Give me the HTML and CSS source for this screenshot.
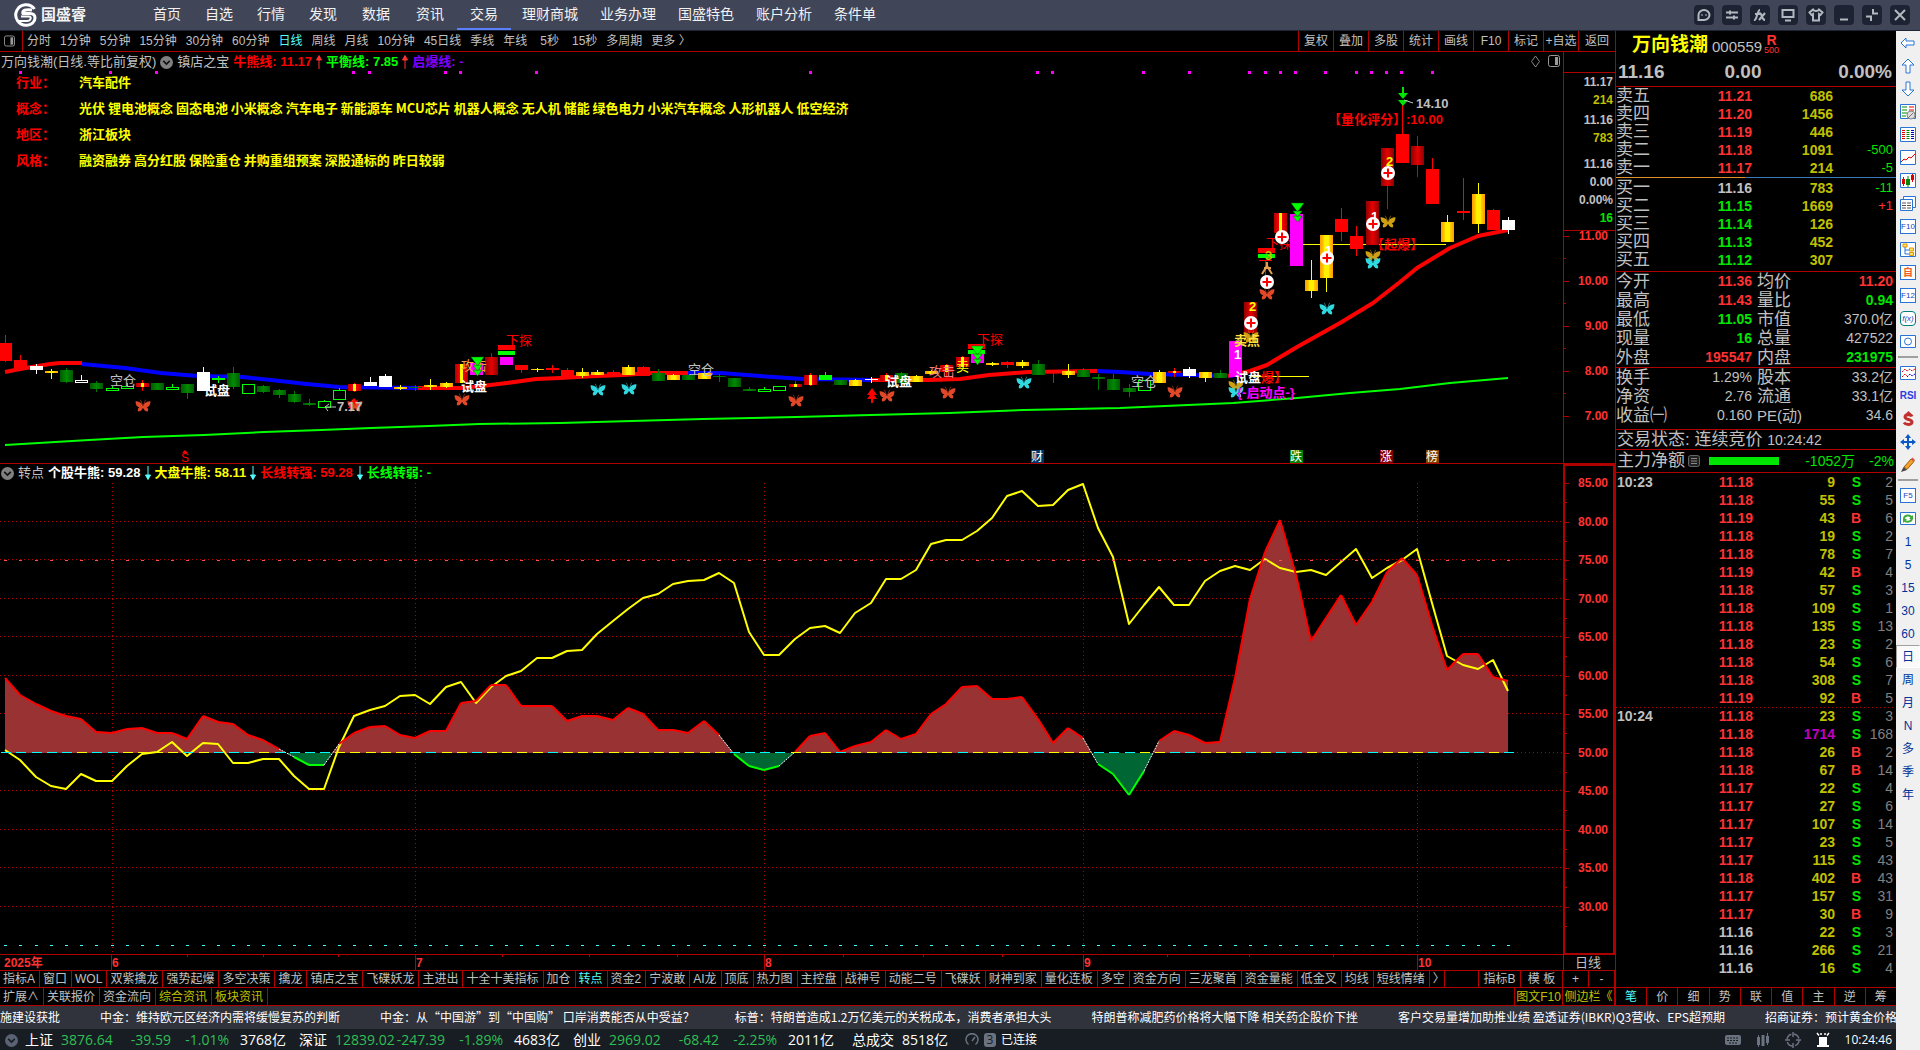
FILE: index.html
```html
<!DOCTYPE html>
<html lang="zh-CN">
<head>
<meta charset="utf-8">
<title>国盛睿 - 万向钱潮</title>
<link rel="stylesheet" href="styles.css">
</head>
<body>
<svg class="defs" width="0" height="0" aria-hidden="true">
  <defs>
    <linearGradient id="g-green"><stop offset="0" stop-color="#005a00"/><stop offset=".5" stop-color="#008a00"/><stop offset="1" stop-color="#005a00"/></linearGradient>
    <linearGradient id="g-yellow"><stop offset="0" stop-color="#ff9c00"/><stop offset=".25" stop-color="#ffc400"/><stop offset=".35" stop-color="#fff000"/><stop offset=".65" stop-color="#fff000"/><stop offset=".75" stop-color="#ffc400"/><stop offset="1" stop-color="#ff9c00"/></linearGradient>
    <linearGradient id="g-dark"><stop offset="0" stop-color="#900000"/><stop offset=".5" stop-color="#e60000"/><stop offset="1" stop-color="#900000"/></linearGradient>
    <linearGradient id="g-stripe"><stop offset="0" stop-color="#b00000"/><stop offset=".38" stop-color="#ff0000"/><stop offset=".38" stop-color="#ffff00"/><stop offset=".62" stop-color="#ffff00"/><stop offset=".62" stop-color="#ff0000"/><stop offset="1" stop-color="#b00000"/></linearGradient>
    <symbol id="butterfly" viewBox="0 0 16 14">
      <path fill="currentColor" d="M8 7C6 3 3 2 0 2c0 3 1 6 4 6.500C2 9.500 2 11.500 3 13c2.500 0 4-1.500 5-4 1 2.500 2.500 4 5 4 1-1.500 1-3.500-1-4.500 3-.5 4-3.500 4-6.500-3 0-6 1-8 5z"/>
      <path fill="none" stroke="currentColor" stroke-opacity=".6" d="M7.500 6L5 0M8.500 6L11 0"/>
    </symbol>
    <symbol id="plus" viewBox="0 0 14 14"><circle cx="7" cy="7" r="7" fill="#fff"/><path stroke="#f00" stroke-width="2" d="M7 2.500v9M2.500 7h9"/></symbol>
    <symbol id="up" viewBox="0 0 6 14"><path d="M3 14V1M0.500 5L3 0.500 5.500 5z" stroke="currentColor" fill="currentColor" stroke-width="1"/></symbol>
    <symbol id="down" viewBox="0 0 6 14"><path d="M3 0v13M0.500 9L3 13.500 5.500 9z" stroke="currentColor" fill="currentColor" stroke-width="1"/></symbol>
    <symbol id="chev" viewBox="0 0 12 12"><circle cx="6" cy="6" r="6" fill="#808080"/><path d="M3 4.500l3 3 3-3" stroke="#111" stroke-width="1.500" fill="none"/></symbol>
    <symbol id="pane" viewBox="0 0 12 12"><rect x=".5" y=".5" width="11" height="11" rx="2" fill="none" stroke="#999"/><path d="M7 2h3v8H7z" fill="#999"/></symbol>
  </defs>
</svg>
<div class="app">
  <header class="top">
    <a class="logo" href="#">
      <svg width="24" height="24" viewBox="0 0 24 24"><path fill="none" stroke="#fff" stroke-width="3" d="M20.500 6A10.300 10.300 0 1 0 13 22.200c4 0 8-3 8-7.200 0-3-2-4.500-5-4.500H9c-1-3 2-4.500 9-3.500"/><path fill="none" stroke="#fff" stroke-width="2" d="M7 13.500h8c3 0 2 4.500-2 4.500H5"/></svg>
      <span>国盛睿</span>
    </a>
    <nav class="menu">
      <div class="menu-group short"><a href="#">首页</a><a href="#">自选</a><a href="#">行情</a><a href="#">发现</a></div>
      <div class="menu-group"><a href="#">数据</a><a href="#">资讯</a><a href="#" class="on">交易</a></div>
      <div class="menu-group long"><a href="#">理财商城</a><a href="#">业务办理</a><a href="#">国盛特色</a><a href="#">账户分析</a><a href="#">条件单</a></div>
    </nav>
    <div class="win">
      <button aria-label="消息"><svg viewBox="0 0 20 20"><path d="M4.500 15V10a5.500 5 0 1 1 5.500 5z"/><path d="M8 9.500v1M12 9.500v1"/></svg></button>
      <button aria-label="设置"><svg viewBox="0 0 20 20"><path d="M4 7.500h12M4 12.500h12M8 5.500v4M12 10.500v4"/></svg></button>
      <button aria-label="公式"><svg viewBox="0 0 20 20"><path d="M4 15c3 1 3-10 6-10M5 9h5M9 8c4 0 2 7 6 7M15 8l-6 7"/></svg></button>
      <button aria-label="屏幕"><svg viewBox="0 0 20 20"><path d="M4.500 5h11v7h-11zM7 15.500h6"/></svg></button>
      <button aria-label="皮肤"><svg viewBox="0 0 20 20"><path d="M7 4.500L3.500 7.500 5.500 10 7 9v6.500h6V9l1.500 1 2-2.500L13 4.500c-1 2-5 2-6 0z"/></svg></button>
      <button aria-label="最小化"><svg viewBox="0 0 20 20"><path d="M6 14.500h8"/></svg></button>
      <button aria-label="还原"><svg viewBox="0 0 20 20"><path d="M4 11.500h5V16M16 8.500h-5V4"/></svg></button>
      <button aria-label="关闭"><svg viewBox="0 0 20 20"><path d="M5 5l10 10M15 5L5 15"/></svg></button>
    </div>
  </header>

  <div class="body">
    <main class="work">
      <div class="panels">
        <section class="charts">
          <div class="periods">
            <button class="pane-btn" aria-label="切换窗格"><svg width="11" height="12"><use href="#pane"/></svg></button>
            <div class="period-list">
              <button>分时</button><button>1分钟</button><button>5分钟</button><button>15分钟</button><button>30分钟</button><button>60分钟</button><button class="on">日线</button><button>周线</button><button>月线</button><button>10分钟</button><button>45日线</button><button>季线</button><button>年线</button><button class="wide">5秒</button><button>15秒</button><button>多周期</button><button>更多 〉</button>
            </div>
            <div class="tools"><button>复权</button><button>叠加</button><button>多股</button><button>统计</button><button>画线</button><button>F10</button><button>标记</button><button>+自选</button><button>返回</button></div>
          </div>

          <div class="pane price">
            <svg class="plot" id="price-plot" viewBox="0 52 1615 412"></svg>
            <div class="overlay">
              <div class="legend">
                <span class="gray">万向钱潮(日线.等比前复权)</span><svg width="13" height="13"><use href="#chev"/></svg><span class="gray">镇店之宝</span>
                <b class="red">牛熊线: 11.17</b><svg class="red2" width="6" height="14"><use href="#up"/></svg>
                <b class="lime">平衡线: 7.85</b><svg class="red2" width="6" height="14"><use href="#up"/></svg>
                <b class="purple">启爆线: -</b>
              </div>
              <dl class="facts">
                <dt>行业：</dt><dd>汽车配件</dd>
                <dt>概念：</dt><dd>光伏 锂电池概念 固态电池 小米概念 汽车电子 新能源车 MCU芯片 机器人概念 无人机 储能 绿色电力 小米汽车概念 人形机器人 低空经济</dd>
                <dt>地区：</dt><dd>浙江板块</dd>
                <dt>风格：</dt><dd>融资融券 高分红股 保险重仓 并购重组预案 深股通标的 昨日较弱</dd>
              </dl>
            </div>
          </div>

          <div class="pane turn">
            <svg class="plot" id="turn-plot" viewBox="0 464 1615 506"></svg>
            <div class="overlay">
              <div class="legend second">
                <svg width="13" height="13"><use href="#chev"/></svg><span class="gray">转点</span>
                <b class="white">个股牛熊: 59.28</b><svg class="cyan" width="6" height="14"><use href="#down"/></svg>
                <b class="yellow">大盘牛熊: 58.11</b><svg class="cyan" width="6" height="14"><use href="#down"/></svg>
                <b class="red">长线转强: 59.28</b><svg class="cyan" width="6" height="14"><use href="#down"/></svg>
                <b class="lime">长线转弱: -</b>
              </div>
            </div>
          </div>

          <div class="tabs">
            <button>指标A</button><button>窗口</button><button>WOL</button><button>双紫擒龙</button><button>强势起爆</button><button>多空决策</button><button>擒龙</button><button>镇店之宝</button><button>飞碟妖龙</button><button>主进出</button><button>十全十美指标</button><button>加仓</button><button class="on">转点</button><button>资金2</button><button>宁波敢</button><button>AI龙</button><button>顶底</button><button>热力图</button><button>主控盘</button><button>战神号</button><button>动能二号</button><button>飞碟妖</button><button>财神到家</button><button>量化连板</button><button>多空</button><button>资金方向</button><button>三龙聚首</button><button>资金量能</button><button>低金叉</button><button>均线</button><button>短线情绪</button><button class="more">〉</button>
            <div class="tabs-end"><button class="w42">指标B</button><button class="w42">模 板</button><button class="w26">+</button><button class="w26">-</button></div>
          </div>
          <div class="tabs links">
            <button>扩展∧</button><button>关联报价</button><button>资金流向</button><button class="gold">综合资讯</button><button class="gold">板块资讯</button>
            <div class="tabs-end"><button class="gold w48">图文F10</button><button class="gold w52">侧边栏《</button></div>
          </div>
        </section>

        <aside class="quote">
          <div class="title">
            <h1>万向钱潮</h1><span class="code">000559</span><span class="mark"><b>R</b><small>500</small></span>
          </div>
          <div class="last"><span>11.16</span><span>0.00</span><span>0.00%</span></div>
          <table class="book asks">
            <tr><th>卖五</th><td class="r">11.21</td><td class="y">686</td><td></td></tr>
            <tr><th>卖四</th><td class="r">11.20</td><td class="y">1456</td><td></td></tr>
            <tr><th>卖三</th><td class="r">11.19</td><td class="y">446</td><td></td></tr>
            <tr><th>卖二</th><td class="r">11.18</td><td class="y">1091</td><td class="g">-500</td></tr>
            <tr><th>卖一</th><td class="r">11.17</td><td class="y">214</td><td class="g">-5</td></tr>
          </table>
          <div class="split"></div>
          <table class="book bids">
            <tr><th>买一</th><td>11.16</td><td class="y">783</td><td class="g">-11</td></tr>
            <tr><th>买二</th><td class="g">11.15</td><td class="y">1669</td><td class="r">+1</td></tr>
            <tr><th>买三</th><td class="g">11.14</td><td class="y">126</td><td></td></tr>
            <tr><th>买四</th><td class="g">11.13</td><td class="y">452</td><td></td></tr>
            <tr><th>买五</th><td class="g">11.12</td><td class="y">307</td><td></td></tr>
          </table>
          <table class="stats">
            <tr><th>今开</th><td class="r">11.36</td><th>均价</th><td class="r">11.20</td></tr>
            <tr><th>最高</th><td class="r">11.43</td><th>量比</th><td class="g">0.94</td></tr>
            <tr><th>最低</th><td class="g">11.05</td><th>市值</th><td class="thin">370.0亿</td></tr>
            <tr><th>现量</th><td class="g">16</td><th>总量</th><td class="thin">427522</td></tr>
            <tr><th>外盘</th><td class="r">195547</td><th>内盘</th><td class="g">231975</td></tr>
          </table>
          <table class="stats tall">
            <tr><th>换手</th><td>1.29%</td><th>股本</th><td>33.2亿</td></tr>
            <tr><th>净资</th><td>2.76</td><th>流通</th><td>33.1亿</td></tr>
            <tr><th>收益㈠</th><td>0.160</td><th class="pe">PE(动)</th><td>34.6</td></tr>
          </table>
          <div class="state">交易状态: 连续竞价 <span>10:24:42</span></div>
          <div class="flow"><span class="lbl">主力净额</span><svg width="12" height="12" viewBox="0 0 12 12"><rect x=".5" y=".5" width="11" height="11" rx="2" fill="#222" stroke="#666"/><path stroke="#888" d="M3 3.500h6M3 6h6M3 8.500h6"/></svg><i></i><b>-1052万</b><b>-2%</b></div>
          <table class="ticks">
            <tr><th>10:23</th><td class="r">11.18</td><td>9</td><td class="g">S</td><td>2</td></tr>
            <tr><th></th><td class="r">11.18</td><td>55</td><td class="g">S</td><td>5</td></tr>
            <tr><th></th><td class="r">11.19</td><td>43</td><td class="r">B</td><td>6</td></tr>
            <tr><th></th><td class="r">11.18</td><td>19</td><td class="g">S</td><td>2</td></tr>
            <tr><th></th><td class="r">11.18</td><td>78</td><td class="g">S</td><td>7</td></tr>
            <tr><th></th><td class="r">11.19</td><td>42</td><td class="r">B</td><td>4</td></tr>
            <tr><th></th><td class="r">11.18</td><td>57</td><td class="g">S</td><td>3</td></tr>
            <tr><th></th><td class="r">11.18</td><td>109</td><td class="g">S</td><td>1</td></tr>
            <tr><th></th><td class="r">11.18</td><td>135</td><td class="g">S</td><td>13</td></tr>
            <tr><th></th><td class="r">11.18</td><td>23</td><td class="g">S</td><td>2</td></tr>
            <tr><th></th><td class="r">11.18</td><td>54</td><td class="g">S</td><td>6</td></tr>
            <tr><th></th><td class="r">11.18</td><td>308</td><td class="g">S</td><td>7</td></tr>
            <tr><th></th><td class="r">11.19</td><td>92</td><td class="r">B</td><td>5</td></tr>
            <tr class="minute"><th>10:24</th><td class="r">11.18</td><td>23</td><td class="g">S</td><td>3</td></tr>
            <tr><th></th><td class="r">11.18</td><td class="big">1714</td><td class="g">S</td><td>168</td></tr>
            <tr><th></th><td class="r">11.18</td><td>26</td><td class="r">B</td><td>2</td></tr>
            <tr><th></th><td class="r">11.18</td><td>67</td><td class="r">B</td><td>14</td></tr>
            <tr><th></th><td class="r">11.17</td><td>22</td><td class="g">S</td><td>4</td></tr>
            <tr><th></th><td class="r">11.17</td><td>27</td><td class="g">S</td><td>6</td></tr>
            <tr><th></th><td class="r">11.17</td><td>107</td><td class="g">S</td><td>14</td></tr>
            <tr><th></th><td class="r">11.17</td><td>23</td><td class="g">S</td><td>5</td></tr>
            <tr><th></th><td class="r">11.17</td><td>115</td><td class="g">S</td><td>43</td></tr>
            <tr><th></th><td class="r">11.18</td><td>402</td><td class="r">B</td><td>43</td></tr>
            <tr><th></th><td class="r">11.17</td><td>157</td><td class="g">S</td><td>31</td></tr>
            <tr><th></th><td class="r">11.17</td><td>30</td><td class="r">B</td><td>9</td></tr>
            <tr><th></th><td>11.16</td><td>22</td><td class="g">S</td><td>3</td></tr>
            <tr><th></th><td>11.16</td><td>266</td><td class="g">S</td><td>21</td></tr>
            <tr><th></th><td>11.16</td><td>16</td><td class="g">S</td><td>4</td></tr>
          </table>
          <div class="quote-tabs"><button class="on">笔</button><button>价</button><button>细</button><button>势</button><button>联</button><button>值</button><button>主</button><button>逆</button><button>筹</button></div>
        </aside>
      </div>

      <div class="news">
        <a href="#">施建设获批</a><a href="#">中金：维持欧元区经济内需将缓慢复苏的判断</a><a href="#">中金：从“中国游”到“中国购” 口岸消费能否从中受益？</a><a href="#">标普：特朗普造成1.2万亿美元的关税成本，消费者承担大头</a><a href="#">特朗普称减肥药价格将大幅下降 相关药企股价下挫</a><a href="#">客户交易量增加助推业绩 盈透证券(IBKR)Q3营收、EPS超预期</a><a href="#">招商证券：预计黄金价格</a>
      </div>

      <footer class="status">
        <svg width="13" height="13" viewBox="0 0 12 12"><circle cx="6" cy="6" r="6" fill="#5b6273"/><path d="M3 4.500l3 3 3-3" stroke="#171d22" stroke-width="1.500" fill="none"/></svg>
        <div class="index"><span>上证</span><em>3876.64</em><em>-39.59</em><em>-1.01%</em><span>3768亿</span></div>
        <div class="index"><span>深证</span><em>12839.02</em><em>-247.39</em><em>-1.89%</em><span>4683亿</span></div>
        <div class="index"><span>创业</span><em>2969.02</em><em>-68.42</em><em>-2.25%</em><span>2011亿</span></div>
        <div class="total"><span>总成交</span><span>8518亿</span></div>
        <div class="link"><svg width="14" height="14" viewBox="0 0 14 14"><path d="M3.500 11.500a6 6 0 1 1 7 0M7 8l3-4" fill="none" stroke="#6b7280" stroke-width="1.500"/></svg><span class="badge">3</span><span>已连接</span></div>
        <div class="tray">
          <svg width="16" height="16" viewBox="0 0 16 16"><rect y="3" width="16" height="10" rx="2" fill="#6b7280"/><path stroke="#171d22" stroke-dasharray="2 1" d="M2 6h12M2 8.500h12M4 11h8"/></svg>
          <svg width="14" height="16" viewBox="0 0 14 16"><path fill="#6b7280" d="M1 5h3v8H1zM5.500 3h3v11h-3zM10 4h3v7h-3zM2 3h1v12H2zM11 1h1v12h-1z"/></svg>
          <svg width="16" height="16" viewBox="0 0 16 16"><circle cx="8" cy="8" r="6" fill="none" stroke="#6b7280" stroke-width="1.500" stroke-dasharray="7 2.400"/><path stroke="#6b7280" stroke-width="1.500" d="M8 0v5M8 11v5M0 8h5M11 8h5"/></svg>
          <svg width="14" height="16" viewBox="0 0 14 16"><path fill="#fff" d="M3 5h8v8h2v2H1v-2h2z"/><path stroke="#fff" stroke-width="1.500" d="M1 1l2 2.500M13 1l-2 2.500M5 1v2M9 1v2"/></svg>
          <time>10:24:46</time>
        </div>
      </footer>
    </main>

    <div class="rail" role="toolbar" aria-label="工具栏">
      <button aria-label="后退"><svg viewBox="0 0 16 16"><path fill="#fff" stroke="#2a74d8" d="M1 8l5-5v3h8v4H6v3z"/></svg></button>
      <button aria-label="上移"><svg viewBox="0 0 16 16"><path fill="#fff" stroke="#2a74d8" d="M8 1l6 6h-4v8H6V7H2z"/></svg></button>
      <button aria-label="下移"><svg viewBox="0 0 16 16"><path fill="#fff" stroke="#2a74d8" d="M8 15l6-6h-4V1H6v8H2z"/></svg></button>
      <button aria-label="报表"><svg viewBox="0 0 16 16"><path class="box" d="M.5.5h15v14H.5z"/><path stroke="#080" d="M2 3h5M2 6h5M2 9h5M2 12h4"/><path stroke="#d00" d="M9 3h5M9 6h5"/><circle cx="11" cy="11" r="4" fill="#ddd" stroke="#888"/><path stroke="#777" d="M8 14l5-5"/></svg></button>
      <button aria-label="行情列表"><svg viewBox="0 0 16 16"><path class="box" d="M.5.5h15v14H.5z"/><path stroke="#d00" d="M2 3.500h3M2 5.500h3M2 7.500h3M2 9.500h3M2 11.500h3"/><path stroke="#080" d="M6.500 3.500h3M6.500 5.500h3M6.500 7.500h3M6.500 9.500h3M6.500 11.500h3"/><path stroke="#00c" d="M11 3.500h3M11 5.500h3M11 7.500h3M11 9.500h3M11 11.500h3"/></svg></button>
      <button aria-label="分时图"><svg viewBox="0 0 16 16"><path class="box" d="M.5.5h15v14H.5z"/><path stroke="#d00" fill="none" d="M1 12l3-3 2 1 3-3 2 1 4-4"/></svg></button>
      <button aria-label="K线图"><svg viewBox="0 0 16 16"><path class="box" d="M.5.5h15v14H.5z"/><path fill="#d00" d="M2 6h3v5H2zM11 2h3v5h-3zM3 4h1v9H3zM12 1h1v8h-1z"/><path fill="#080" d="M6 6h4v6H6zM7.500 3h1v11h-1z"/></svg></button>
      <button aria-label="多窗口"><svg viewBox="0 0 16 16"><path class="box" d="M3.500.5h12v11h-12z"/><path class="box" d="M.5 3.500h12v11H.5z"/><path stroke="#555" d="M2 7h4M7 7h4M2 9.500h4M7 9.500h4M2 12h4M7 12h4"/></svg></button>
      <button class="tag">F10</button>
      <button aria-label="板块树"><svg viewBox="0 0 16 16"><path class="box" d="M.5.5h15v14H.5z"/><path fill="#ffe066" stroke="#e69500" d="M3 2h4v3H3zM9.500 6h4v3h-4zM9.500 10.500h4v3h-4z"/><path stroke="#2a74d8" fill="none" d="M5 5v7h4M5 8h4"/></svg></button>
      <button class="tag self">自</button>
      <button class="tag">F12</button>
      <button class="tag fx">f(x)</button>
      <button aria-label="圈选"><svg viewBox="0 0 16 16"><path class="box" d="M.5 1.500h15v12H.5z"/><circle cx="8" cy="7.500" r="3.500" fill="none" stroke="#2a74d8"/></svg></button>
      <hr>
      <button aria-label="叠加曲线"><svg viewBox="0 0 16 16"><path class="box" d="M.5 1.500h15v13H.5z"/><path stroke="#d00" fill="none" stroke-dasharray="2 1" d="M2 7l3-3 2 2 3-2 2 2 3-2M2 12l3-3 2 2"/><path stroke="#00c" fill="none" stroke-dasharray="2 1" d="M7 12l3-3 2 2 3-2"/></svg></button>
      <button class="rsi">RSI</button>
      <button class="dollar" aria-label="标价"><svg viewBox="0 0 16 16"><path fill="none" stroke="#c03030" stroke-width="3" d="M12 5.500C11 3 5 3 5 6s7 2 7 5-6 3.500-8 .5"/><path fill="#c03030" d="M8.500 0l3.500 3.500H5z"/></svg></button>
      <button aria-label="移动"><svg viewBox="0 0 16 16"><path fill="#0a58c8" d="M8 0l3 4H5zM8 16l-3-4h6zM0 8l4-3v6zM16 8l-4 3V5zM7 4h2v3h3v2H9v3H7V9H4V7h3z"/></svg></button>
      <button aria-label="画笔"><svg viewBox="0 0 16 16"><path fill="#f0a030" stroke="#a06010" d="M4 10l7-8 3 2.500-7 8z"/><path fill="#444" d="M1 15l2.500-5L7 13z"/><path fill="#e05050" d="M11 2l1.500-1.500L15 3l-1 1.500z"/></svg></button>
      <hr>
      <button class="tag">F5</button>
      <button aria-label="刷新"><svg viewBox="0 0 16 16"><path class="box" d="M.5 1.500h15v12H.5z"/><path fill="none" stroke="#3cab3c" stroke-width="2" d="M4 8c0-4 6-5 8-1M12 7c0 4-6 5-8 2"/><path fill="#3cab3c" d="M13 4v4H9zM3 12V8h4z"/></svg></button>
      <button>1</button><button>5</button><button>15</button><button>30</button><button>60</button><button class="on">日</button><button>周</button><button>月</button><button>N</button><button>多</button><button>季</button><button>年</button>
    </div>
  </div>
</div>
<script src="charts.js"></script>
</body>
</html>
```
FILE: styles.css
```css
:root {
  --line: #b00000;
  --gray: #c0c0c0;
  --ui: "Liberation Sans", "Noto Sans CJK SC", sans-serif;
}
* { box-sizing: border-box; }
body { margin: 0; background: #000; color: var(--gray); font: 12px/16px var(--ui); }
button { margin: 0; padding: 0; border: 0; background: none; color: inherit; font: inherit; white-space: nowrap; }
a { color: inherit; text-decoration: none; }
svg { display: block; flex: none; }
.defs { position: absolute; }
.app { display: flex; flex-direction: column; min-height: 100vh; overflow: hidden; }

/* top bar */
.top { display: flex; align-items: center; height: 31px; background: #404558; border-bottom: 1px solid #1d2638; color: #f2f2f2; }
.logo { display: flex; align-items: center; gap: 3px; width: 141px; padding-left: 14px; font-size: 15px; font-weight: 700; }
.menu { display: flex; height: 100%; font-size: 14px; }
.menu-group { display: flex; }
.menu a { display: flex; align-items: center; padding: 0 13px; border-bottom: 2px solid transparent; }
.menu .short a { padding: 0 12px; }
.menu .long a { padding: 0 11px; }
.menu a.on { border-color: #5b7fff; }
.win { display: flex; gap: 8px; margin-left: auto; padding-right: 10px; }
.win button { width: 20px; height: 20px; border-radius: 4px; background: #1e2333; }
.win svg { width: 20px; height: 20px; fill: none; stroke: #b4b8c0; stroke-width: 2; }

.body { display: flex; flex: 1; }
.work { display: flex; flex: 1; flex-direction: column; min-width: 0; }
.panels { display: flex; flex: 1; }
.charts { flex: 1; min-width: 0; }

/* period toolbar */
.periods { display: flex; height: 21px; border-bottom: 1px solid var(--line); }
.pane-btn { width: 23px; padding-left: 4px; border-right: 1px solid var(--line); }
.period-list { display: flex; gap: 9px; padding-left: 4px; }
.period-list .on, .tabs .on, .quote-tabs .on { color: #54fcfc; }
.period-list .wide { padding: 0 4px; }
.tools { display: flex; margin-left: auto; }
.tools button { width: 35px; border-left: 1px solid var(--line); }
.tools button:last-child { width: 37px; }

/* chart panes: drawing and legend share one cell */
.pane { display: grid; }
.pane > * { grid-area: 1 / 1; }
.plot { width: 100%; height: auto; }
.plot text { font: 12px var(--ui); }
.plot .bold { font-weight: 700; }
.plot .axis { font-weight: 700; fill: #ff3232; text-anchor: end; }
.plot .lab { font-size: 13px; }
.overlay { font-size: 13px; }
.legend { display: flex; align-items: center; gap: 4px; height: 20px; padding-left: 1px; }
.second { height: 18px; }
.facts { display: grid; grid-template-columns: 63px 1fr; grid-auto-rows: 26px; margin: -3px 0 0 16px; font-family: "Noto Sans CJK SC", sans-serif; font-weight: 700; line-height: 26px; }
.facts dt { color: #f00; }
.facts dd { margin: 0; color: #ff0; }
.gray { color: var(--gray); }
.white { color: #fff; }
.yellow { color: #ff0; }
.red { color: #f00; }
.red2 { color: #ff3232; }
.lime { color: #0f0; }
.purple { color: #8000ff; }
.cyan { color: #54fcfc; }

/* indicator tabs */
.tabs { display: flex; height: 17px; border-top: 1px solid var(--line); }
.tabs.links { height: 19px; border-bottom: 1px solid var(--line); }
.tabs button { padding: 0 4px 0 3px; border-right: 1px solid var(--line); }
.tabs .more { width: 15px; overflow: hidden; }
.tabs .gold { color: #c0c000; }
.tabs-end { display: flex; margin-left: auto; border-left: 1px solid var(--line); }
.tabs-end button { padding: 0; }
.w26 { width: 26px; }
.w42 { width: 42px; }
.w48 { width: 48px; }
.w52 { width: 52px; }

/* quote panel */
.quote { display: flex; flex-direction: column; width: 281px; border-left: 1px solid var(--line); font-size: 14px; font-weight: 700; }
.title { display: flex; align-items: center; height: 27px; padding-left: 16px; }
.title h1 { margin: 0; color: #ff0; font-size: 19px; font-weight: 700; line-height: 26px; }
.code { padding: 4px 2px 0 4px; font-size: 15px; font-weight: 400; }
.mark { display: grid; color: #ff3232; text-align: center; line-height: 10px; }
.mark small { font-size: 9px; font-weight: 400; }
.last { display: grid; grid-template-columns: 92px 1fr 92px; height: 29px; padding: 0 4px 0 2px; border-bottom: 1px solid var(--line); font-size: 19px; line-height: 28px; }
.last :nth-child(2) { text-align: center; padding-right: 24px; }
.last :nth-child(3) { text-align: right; }
.quote table { width: 100%; border-collapse: collapse; table-layout: fixed; }
.quote td { padding: 0; text-align: right; }
.quote th { padding: 0; text-align: left; font-weight: 400; font-size: 17px; white-space: nowrap; }
.r { color: #ff3232; }
.g { color: #00e600; }
.y { color: #c0c000; }
.book tr { height: 18px; line-height: 18px; }
.book th { width: 66px; }
.book td:nth-child(2) { width: 70px; }
.book td:nth-child(3) { width: 81px; }
.book td:nth-child(4) { padding-right: 3px; font-size: 13px; font-weight: 400; }
.split { height: 1px; background: linear-gradient(90deg, #e0902c 46%, #3a7ab8 46%); }
.bids { margin: 1px 0 2px; }
.stats { border-top: 1px solid var(--line); }
.stats tr { height: 19px; line-height: 19px; }
.stats th { width: 66px; }
.stats td { width: 70px; }
.stats th:nth-child(3) { padding-left: 5px; }
.stats td:nth-child(4) { width: auto; padding-right: 3px; }
.stats .pe { font-size: 15px; }
.tall td, .stats .thin { font-weight: 400; }
.tall { margin-bottom: 4px; }
.state { height: 20px; padding-left: 1px; border-top: 1px solid var(--line); font-size: 17px; font-weight: 400; line-height: 19px; }
.state span { font-size: 14px; }
.flow { display: flex; align-items: center; height: 24px; padding: 0 2px 0 1px; border-top: 1px solid var(--line); border-bottom: 1px solid var(--line); color: #00e600; font-weight: 400; }
.flow .lbl { margin-right: 3px; color: var(--gray); font-size: 17px; }
.flow i { width: 70px; height: 8px; margin: 0 0 0 9px; background: #00e600; }
.flow b { flex: 1; text-align: right; font-weight: 400; }
.flow b:last-child { flex: 0 0 39px; }
.ticks tr { height: 18px; line-height: 18px; }
.quote .ticks th { width: 66px; padding-left: 1px; font-size: 14px; font-weight: 700; }
.ticks td:nth-child(2) { width: 71px; }
.ticks td:nth-child(3) { width: 82px; color: #c0c000; }
.ticks td:nth-child(4) { width: 26px; }
.ticks td:nth-child(5) { padding-right: 3px; color: #808080; font-weight: 400; }
.ticks td.big { color: #c000c0; }
.ticks .minute { background: repeating-linear-gradient(90deg, #b00000 0 1px, transparent 1px 4px) top / 100% 1px no-repeat; }
.quote-tabs { display: flex; height: 19px; margin-top: auto; border-top: 1px solid var(--line); border-bottom: 1px solid var(--line); font-size: 12px; font-weight: 400; }
.quote-tabs button { flex: 1; border-right: 1px solid var(--line); }
.quote-tabs button:last-child { border: 0; }

/* news ticker and status bar */
.news { display: flex; gap: 40px; height: 23px; overflow: hidden; background: #30323c; color: #fff; font: 12px/22px "Noto Sans CJK SC", sans-serif; white-space: nowrap; }
.news a { flex: none; }
.status { display: flex; align-items: center; height: 22px; padding: 0 4px 0 5px; background: #171d22; color: #fff; font: 14px/22px "Open Sans", "Noto Sans CJK SC", sans-serif; white-space: nowrap; }
.index { display: grid; grid-template-columns: 36px 57px 53px 58px 70px; }
.index:nth-child(2) { margin-left: 7px; }
.index em { color: #2fbf55; font-style: normal; }
.index em:nth-child(3), .index em:nth-child(4) { text-align: right; }
.index span:last-child { padding-left: 11px; }
.total { display: flex; gap: 8px; padding-left: 5px; }
.link { display: flex; align-items: center; gap: 5px; padding-left: 17px; font-size: 12px; }
.badge { width: 12px; height: 14px; border-radius: 3px; background: #6b7280; color: #171d22; line-height: 14px; text-align: center; }
.tray { display: flex; align-items: center; gap: 15px; margin-left: auto; }
.tray time { font-size: 12px; }

/* right rail */
.rail { display: flex; flex-direction: column; align-items: center; width: 24px; background: #f0f0f0; color: #003399; font-size: 12px; }
.rail button { display: flex; align-items: center; justify-content: center; width: 24px; height: 23px; }
.rail svg { width: 16px; height: 16px; }
.rail .box { fill: #fff; stroke: #2a74d8; }
.rail hr { width: 20px; height: 2px; margin: 3px 0; border: 0; background: #a0a0a0; }
.rail .tag { width: 16px; height: 15px; margin: 4px 0; border: 1px solid #2a74d8; background: #fff; color: #1a3fc0; font-size: 8px; }
.rail .self { color: #f06020; font-size: 10px; font-weight: 700; }
.rail .fx { border-radius: 4px; border-color: #00807a; font-style: italic; }
.rail .rsi { color: #2a3fe0; font-size: 10px; font-weight: 700; }
.rail .on { border: 1px solid; border-color: #a0a0a0 #fff #fff #a0a0a0; background: #fafafa; }
```
FILE: charts.js
```js
const STEP = 15.18;
const barX = i => Math.round(5.3 + STEP * i);
const out = { price: [], turn: [] };

const line = (x1, y1, x2, y2, stroke, extra = '') =>
  `<path d="M${x1} ${y1}L${x2} ${y2}" stroke="${stroke}" fill="none" ${extra}/>`;
const crisp = 'shape-rendering="crispEdges"';
const box = (x, y, w, h, fill) => `<rect x="${x}" y="${y}" width="${w}" height="${h}" fill="${fill}" ${crisp}/>`;
const label = (x, y, fill, str, cls = 'lab') => `<text x="${x}" y="${y}" fill="${fill}" class="${cls}">${str}</text>`;
const poly = (pts, stroke, w) =>
  `<polyline points="${pts}" fill="none" stroke="${stroke}" stroke-width="${w}" stroke-linejoin="round"/>`;

/* candles: high, body top, body bottom, low, kind */
const candles = [
  [335,343,361,362,'R'],[355,360,368,370,'R'],[364,366,370,374,'W'],[369,371,373,379,'Y'],[368,370,382,383,'G'],
  [375,380,383,383,'w'],[381,383,389,392,'G'],[386,388,391,391,'g'],[383,386,389,389,'g'],[380,383,387,391,'S'],
  [383,383,390,390,'G'],[384,387,390,390,'g'],[384,384,393,399,'G'],[367,372,391,391,'W'],[376,378,380,383,'L'],
  [367,373,387,389,'G'],[384,384,394,394,'g'],[385,386,392,393,'G'],[389,390,395,398,'G'],[391,394,402,403,'G'],
  [399,403,405,406,'G'],[400,401,408,408,'g'],[388,390,400,400,'g'],[383,384,391,392,'S'],[377,382,386,386,'W'],
  [374,376,387,387,'W'],[385,387,389,390,'Y'],[385,387,388,391,'G'],[379,385,387,390,'Y'],[382,383,387,388,'Y'],
  [364,364,383,383,'S'],[362,363,375,375,'M'],[353,357,375,375,'D'],[357,357,365,365,'M'],[365,365,370,373,'R'],
  [368,369,370,372,'Y'],[365,368,370,373,'R'],[368,370,376,376,'R'],[368,372,376,378,'Y'],[370,372,375,375,'Y'],
  [370,372,375,375,'R'],[365,367,375,375,'Y'],[366,367,376,376,'R'],[369,373,381,381,'G'],[374,375,380,380,'Y'],
  [375,375,380,380,'G'],[373,373,379,379,'Y'],[374,376,377,382,'G'],[378,378,387,387,'G'],[387,389,391,391,'G'],
  [387,389,392,392,'g'],[386,386,391,391,'g'],[381,384,387,387,'S'],[373,375,385,386,'S'],[372,375,380,380,'L'],
  [380,380,385,385,'G'],[379,380,386,386,'Y'],[377,379,380,383,'W'],[373,375,381,381,'S'],[372,373,383,383,'G'],
  [375,376,382,382,'Y'],[370,371,374,374,'Y'],[364,365,372,378,'S'],[356,357,367,367,'S'],[347,350,363,363,'M'],
  [362,363,365,366,'Y'],[361,362,365,368,'R'],[360,362,366,368,'Y'],[360,364,375,375,'G'],[370,370,371,383,'R'],
  [364,371,375,378,'Y'],[368,370,377,377,'G'],[374,377,379,390,'G'],[374,379,390,390,'G'],[384,388,392,397,'G'],
  [380,380,391,391,'g'],[370,372,383,383,'Y'],[368,371,373,377,'S'],[367,369,376,378,'W'],[372,372,378,382,'Y'],
  [370,373,378,378,'G'],[341,341,377,377,'M'],[302,302,333,333,'D'],[260,260,261,282,'R'],[213,213,233,237,'S'],
  [214,214,266,266,'M'],[260,280,291,298,'Y'],[235,235,278,292,'Y'],[208,219,232,241,'R'],[226,236,249,256,'R'],
  [201,201,245,245,'D'],[148,148,186,209,'D'],[105,134,163,163,'R'],[136,146,165,177,'D'],[158,169,204,204,'R'],
  [215,222,242,242,'Y'],[178,211,213,220,'R'],[183,194,224,233,'Y'],[209,210,230,230,'R'],[217,220,230,234,'W']
];
const paint = {
  R: ['#f00', '#f00'], W: ['#fff', '#fff'], Y: ['url(#g-yellow)', '#ff0'], G: ['url(#g-green)', '#007800'],
  S: ['url(#g-stripe)', '#f00'], D: ['url(#g-dark)', '#e00000'], M: ['#f0f', '#f0f'], L: ['#0f0', '#0f0']
};

/* moving averages */
const bull = [
  ['#f00', '5,372 20,369 50,364 60,363 82,363'],
  ['#00f', '82,364 125,368 161,373 198,376 243,377 271,380 307,384 339,387 418,388'],
  ['#f00', '418,388 461,388 482,386 507,383 536,379 560,378 596,376 624,375 649,373 688,373'],
  ['#00f', '688,373 721,373 760,376 803,379 872,380'],
  ['#f00', '872,380 928,380 960,379 989,375 1028,372 1097,371'],
  ['#00f', '1097,371 1120,372 1150,374 1233,376'],
  ['#f00', '1228,376 1250,371 1267,365 1297,347 1340,323 1373,303 1400,282 1417,268 1450,248 1478,236 1508,230']
];
const balance = '5,445 89,440 143,437 204,435 264,432 321,430 371,428 429,426 479,424 560,423 596,422 703,419 796,417 871,415 949,413 1024,410 1120,408 1233,403 1297,398 1350,393 1400,389 1450,383 1508,378';

const p = out.price;
bull.forEach(([c, pts]) => p.push(poly(pts, c, 4)));
p.push(poly(balance, '#0f0', 2));
p.push(box(1303, 244, 143, 1, '#ff0'), box(1252, 376, 57, 1, '#ff0'));
p.push(label(1266, 248, '#f00', '下探'));
candles.forEach(([h, t, b, l, k], i) => {
  const x = barX(i);
  if (k === 'g' || k === 'w') {
    const c = k === 'g' ? '#0f0' : '#fff';
    if (h < t) p.push(box(x, h, 1, t - h, c));
    p.push(`<rect x="${x - 5.5}" y="${t + .5}" width="12" height="${b - t - 1}" fill="#000" stroke="${c}" ${crisp}/>`);
    return;
  }
  p.push(box(x, h, 1, l - h, paint[k][1]), box(x - 6, t, 13, b - t, paint[k][0]));
});

/* signal dots under the legend */
[20,110,156,353,369,445,460,536,810,1037,1052,1143,1189,1249,1265,1280,1295,1325,1356,1371,1386,1401,1432]
  .forEach(x => p.push(box(x - 1, 71, 3, 3, '#f0f')));

/* sell arrows */
const arrow = (x, y) => `<path d="M${x - 6} ${y}h13l-6.500 9zM${x - 4} ${y + 8}h9l-4.500 6zM${x - 4} ${y + 13}h9l-4.500 6z" fill="#0f0" stroke="#006000" stroke-width=".5"/>`;
[[498, 345], [968, 344], [1258, 248]].forEach(([x, y]) =>
  p.push(box(x, y, 17, 5, '#f00'), box(x, y + 6, 17, 4, '#0f0')));
p.push(arrow(977, 346), arrow(1297, 203));
p.push('<path d="M1402 87h2v6h4l-5 6-5-6h4zM1398 100h10l-5 6z" fill="#00e600"/>', line(1404, 100, 1413, 103, '#c0c0c0'));
p.push('<path d="M1267 262v4M1262 274l5-8 5 8M1264 268h7" stroke="#e0a050" stroke-width="2" fill="none"/>');
p.push('<path d="M872 388l5 7h-3l3 4h-4v4h-2v-4h-4l3-4h-3z" fill="#f00"/>', '<path d="M354 398l6 6h-3l3 4h-12l3-4h-3z" fill="#f00"/>');

/* captions */
const captions = [
  [110, 385, '#c0c0c0', '空仓'], [204, 395, '#fff', '试盘', 1], [506, 345, '#f00', '下探'], [461, 391, '#fff', '试盘', 1],
  [461, 370, '#ffa040', '攻击'], [688, 374, '#c0c0c0', '空仓'], [886, 386, '#fff', '试盘', 1], [977, 344, '#f00', '下探'],
  [929, 376, '#f08080', '攻击'], [956, 371, '#ff0', '卖'], [1131, 386, '#c0c0c0', '空仓'], [1234, 345, '#ffe040', '卖点', 1],
  [1261, 382, '#f00', '爆】', 1], [1235, 382, '#fff', '试盘', 1], [1237, 397, '#f0f', '{-启动点-}', 1],
  [1371, 249, '#f00', '【起爆】', 1], [1328, 124, '#f00', '【量化评分】:10.00', 1], [1416, 108, '#c0c0c0', '14.10', 1],
  [337, 411, '#c0c0c0', '7.17', 1], [1234, 359, '#fff', '1', 1], [1249, 311, '#ff0', '2', 1], [1265, 260, '#c0c000', '3', 1],
  [1325, 255, '#fff', '1', 1], [1371, 221, '#fff', '1', 1], [1386, 166, '#ff0', '2', 1]
];
const use = (id, x, y, w, h, c) => `<use href="#${id}" x="${x - w / 2}" y="${y - h / 2}" width="${w}" height="${h}" color="${c}"/>`;
const flies = {
  '#e04828': [[143,406],[355,406],[462,400],[796,401],[887,396],[948,393],[1175,392],[1267,294]],
  '#d0a010': [[1251,337],[1388,222],[1373,256],[1236,386]],
  '#30d8e0': [[598,390],[629,389],[1024,383],[1327,309],[1373,263],[1236,392]]
};
for (const c in flies) flies[c].forEach(([x, y]) => p.push(use('butterfly', x, y, 16, 13, c)));
captions.forEach(([x, y, c, s, b]) => p.push(label(x, y, c, s, b ? 'lab bold' : 'lab')));
p.push(arrow(477, 357));
p.push('<path d="M336 407h-11M329 404l-4 3 3 4" stroke="#c0c0c0" fill="none"/>');
[[1251,323],[1267,282],[1282,237],[1327,258],[1373,224],[1388,173]].forEach(([x, y]) => p.push(use('plus', x, y, 14, 14, '#f00')));

/* event chips */
[[1031, '#003366', '财'], [1290, '#008000', '跌'], [1380, '#800000', '涨'], [1426, '#804000', '榜']].forEach(([x, c, s]) =>
  p.push(box(x, 450, 13, 13, c), label(x, 461, '#fff', s, '')));
p.push(label(181, 462, '#f00', 'S', ''), '<path d="M185 450l3 3h-6z" fill="#f00"/>');

/* price scale */
const red = '#b00000';
p.push(box(0, 463, 1615, 1, red), box(1563, 52, 1, 412, red), box(1563, 72, 52, 1, red), box(1563, 230, 52, 1, red));
p.push('<path d="M1535.500 56l4 5.500-4 5.500-4-5.500z" fill="none" stroke="#888"/>', use('pane', 1554, 61, 12, 12, ''));
[[82,'11.17','#c0c0c0'],[100,'214','#c0c000'],[120,'11.16','#c0c0c0'],[138,'783','#c0c000'],[164,'11.16','#c0c0c0'],
 [182,'0.00','#c0c0c0'],[200,'0.00%','#c0c0c0'],[218,'16','#00e600']].forEach(([y, s, c]) =>
  p.push(`<text class="bold" x="1613" y="${y + 4}" fill="${c}" text-anchor="end">${s}</text>`));
['11.00','10.00','9.00','8.00','7.00'].forEach((s, i) => {
  const y = 236 + 45 * i;
  p.push(box(1564, y, 5, 1, red), `<text class="axis" x="1608" y="${y + 4}">${s}</text>`);
  if (i < 4) p.push(box(1564, y + 22, 2, 1, red));
});

/* turning-point indicator */
const stock = [678,695,704,711,716,719,732,733,729,728,733,733,739,716,722,724,735,740,749,757,765,765,744,733,727,726,735,738,731,731,703,701,685,685,706,706,706,721,716,716,720,708,714,730,730,733,721,735,754,766,770,766,752,736,733,752,746,742,730,739,734,714,704,687,686,699,699,697,719,743,728,738,764,774,795,771,741,731,735,743,742,678,599,552,520,575,641,618,595,625,602,572,558,575,625,670,654,654,677,681];
const market = [750,760,777,786,789,774,781,781,766,754,752,742,756,743,744,763,763,759,759,776,789,789,747,716,710,706,696,695,704,687,682,703,687,676,671,658,658,651,650,634,621,609,598,594,584,581,580,573,583,632,655,655,639,628,626,633,613,603,579,579,570,544,540,540,531,518,496,491,506,505,490,484,528,557,624,605,587,605,605,581,571,566,570,559,568,572,570,575,562,549,578,568,560,549,603,656,665,669,660,691];
const t = out.turn, MID = 753, grid = '#b40000';
const pts = a => a.map((y, i) => `${barX(i)},${y}`);
for (let v = 80; v >= 30; v -= 5) {
  if (v !== 50) t.push(line(0, 752.5 - Math.round((v - 50) * 7.7), 1563, 752.5 - Math.round((v - 50) * 7.7), grid, `stroke-dasharray="1 3" ${crisp}`));
}
t.push(line(1509, 752.5, 1563, 752.5, grid, `stroke-dasharray="1 3" ${crisp}`));
[7, 27, 50, 71, 93].forEach(i => t.push(line(barX(i) + .5, 483, barX(i) + .5, 954, grid, `stroke-dasharray="1 3" ${crisp}`)));
const area = `M${barX(0)} ${MID}L${pts(stock).join('L')}L${barX(99)} ${MID}z`;
t.push(`<clipPath id="above"><path d="M0 464h1563v289H0z"/></clipPath><clipPath id="below"><path d="M0 753h1563v200H0z"/></clipPath>`);
t.push(`<path d="${area}" fill="#993333" clip-path="url(#above)"/><path d="${area}" fill="#006633" clip-path="url(#below)"/>`);
t.push(poly(pts(market).join(' '), '#ff0', 2));
for (let i = 1; i < 100; i++) {
  const a = stock[i - 1], b = stock[i], seg = `${barX(i - 1)},${a} ${barX(i)},${b}`;
  if (a <= MID && b <= MID) t.push(poly(seg, '#f00', 2));
  else if (a > MID && b > MID) t.push(poly(seg, '#0f0', 2));
  else t.push(`<polyline points="${seg}" fill="none" stroke="#fff" stroke-dasharray="2 1"/>`);
}
for (let i = 0; i < 100; i++) {
  const x = barX(i), falling = i === 0 || market[i] >= market[i - 1];
  t.push(box(x - 4, 752, 10, 1, falling ? '#00ffff' : '#ff0'));
  t.push(box(x - 1, 560, 3, 1, '#ff5050'), box(x - 1, 945, 3, 1, '#40ffff'));
}

/* indicator scale and date axis */
t.push(`<rect x="1564" y="465" width="50" height="489" fill="none" stroke="${red}" stroke-width="2" ${crisp}/>`);
for (let k = 0; k < 12; k++) {
  const y = 483 + Math.round(38.5 * k);
  t.push(box(1564, y, 5, 1, red), box(1564, y + 19, 3, 1, red), `<text class="axis" x="1608" y="${y + 4}">${85 - 5 * k}.00</text>`);
}
t.push(box(0, 954, 1615, 1, red), box(1563, 954, 1, 16, red));
[[111, '6'], [415, '7'], [764, '8'], [1083, '9'], [1417, '10']].forEach(([x, s]) =>
  t.push(box(x, 954, 1, 16, red), `<text class="bold" x="${x + 1}" y="967" fill="#ff3232">${s}</text>`));
[187,263,338,502,589,677,843,923,1002,1167,1249,1333].forEach(x => t.push(box(x, 954, 1, 3, red)));
t.push('<text class="bold" x="4" y="967" fill="#ff3232">2025年</text>', label(1575, 967, '#c0c0c0', '日线'));

document.getElementById('price-plot').innerHTML = p.join('');
document.getElementById('turn-plot').innerHTML = t.join('');
```
